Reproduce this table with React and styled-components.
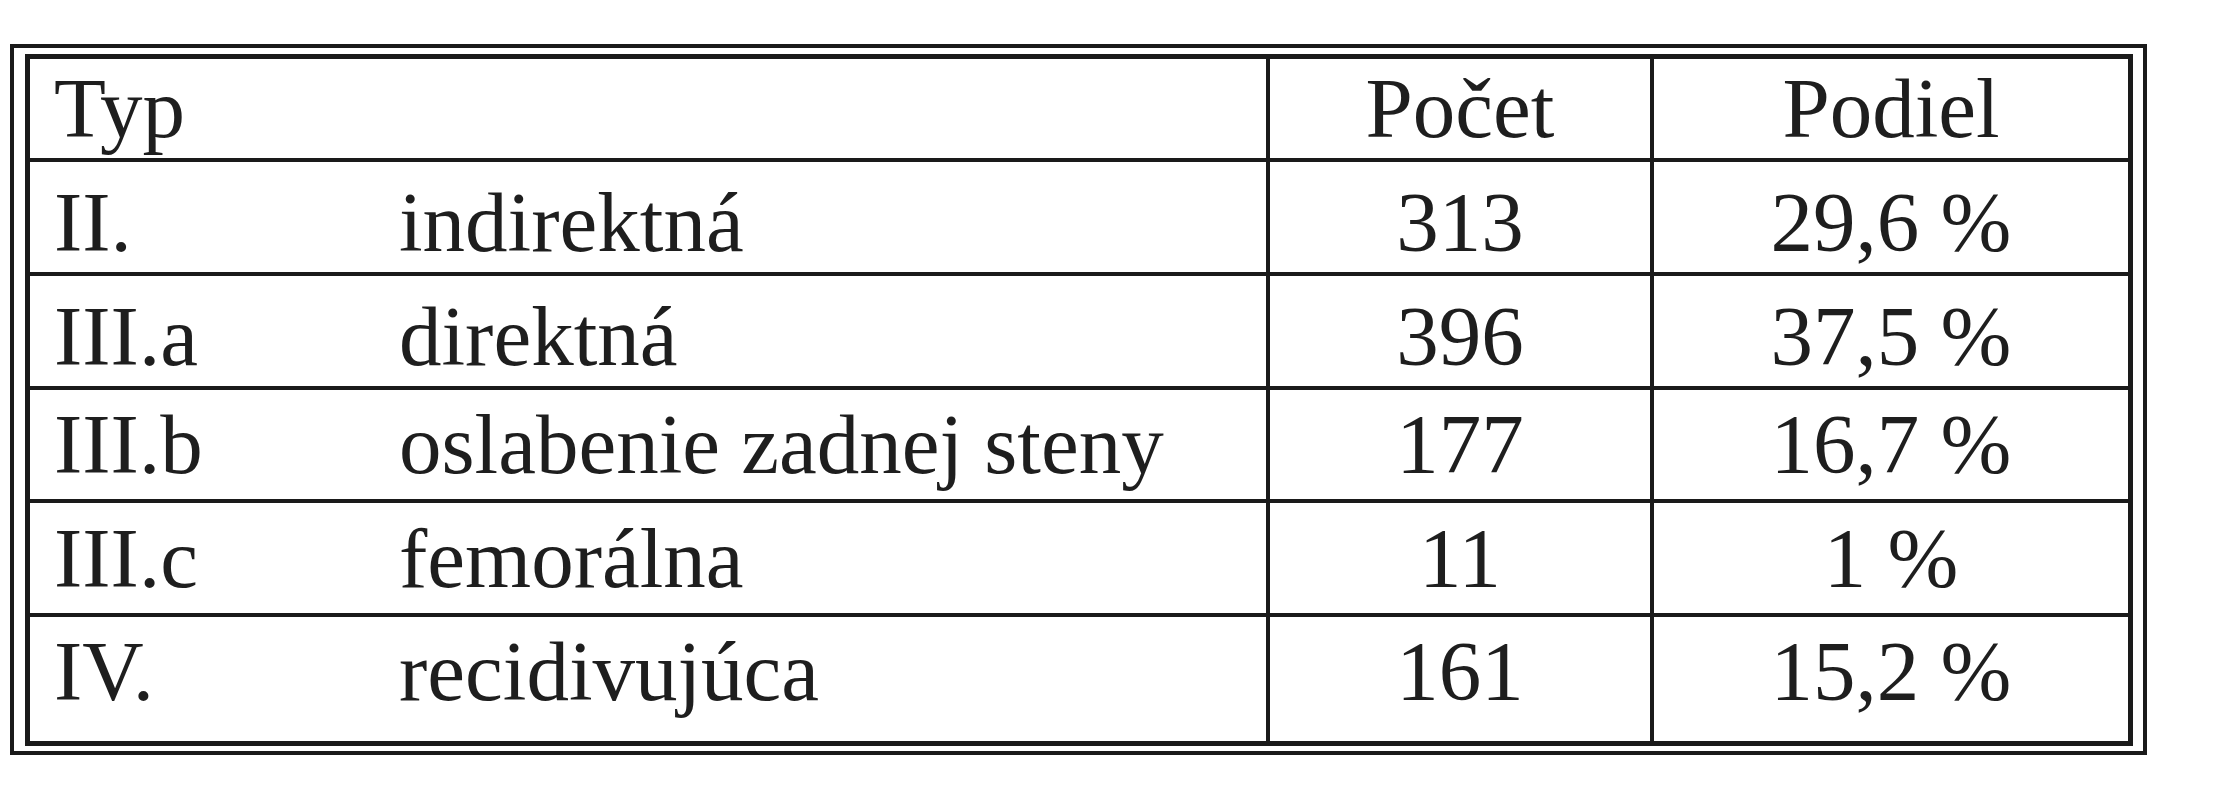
import React from 'react'
import styled, { createGlobalStyle } from 'styled-components'

const rows = [
    { code: 'II.', name: 'indirektná', count: '313', share: '29,6 %', h: 110, pt: 18 },
    { code: 'III.a', name: 'direktná', count: '396', share: '37,5 %', h: 110, pt: 18 },
    { code: 'III.b', name: 'oslabenie zadnej steny', count: '177', share: '16,7 %', h: 109, pt: 12 },
    { code: 'III.c', name: 'femorálna', count: '11', share: '1 %', h: 110, pt: 13 },
    { code: 'IV.', name: 'recidivujúca', count: '161', share: '15,2 %', h: 124, pt: 12 },
]

const App = () => {
    return(
        <>
            <GlobalStyle/>
            <Page>
                <OuterFrame>
                    <InnerFrame>
                        <Row $h={99} $pt={7} $first>
                            <TypeCell>
                                <Code>Typ</Code>
                            </TypeCell>
                            <NumCell>Počet</NumCell>
                            <NumCell>Podiel</NumCell>
                        </Row>
                        {rows.map(row => {
                            return (
                                <Row key={row.code} $h={row.h} $pt={row.pt}>
                                    <TypeCell>
                                        <Code>{row.code}</Code>
                                        <Name>{row.name}</Name>
                                    </TypeCell>
                                    <NumCell>{row.count}</NumCell>
                                    <NumCell>{row.share}</NumCell>
                                </Row>
                            )
                        })}
                    </InnerFrame>
                </OuterFrame>
            </Page>
        </>
    )
}

const GlobalStyle = createGlobalStyle`
    html, body {
        margin: 0;
        padding: 0;
        background: #ffffff;
    }
    * {
        box-sizing: border-box;
    }
`

const Page = styled.div`
    width: 2217px;
    height: 800px;
    padding: 44px 0 0 10px;
    background: #ffffff;
    font-family: "Liberation Serif", "Times New Roman", serif;
    font-size: 85px;
    line-height: 85px;
    color: #1e1e1e;
`

const OuterFrame = styled.div`
    width: 2137px;
    border: 4px solid #1a1a1a;
    padding: 6px 10px 5px 11px;
`

const InnerFrame = styled.div`
    border: 5px solid #1a1a1a;
    display: flex;
    flex-direction: column;
`

const Row = styled.div`
    display: grid;
    grid-template-columns: 1236px 384px 478px;
    height: ${p => p.$h + (p.$first ? 0 : 4)}px;
    border-top: ${p => p.$first ? 'none' : '4px solid #1a1a1a'};

    & > * {
        padding-top: ${p => p.$pt}px;
    }
`

const TypeCell = styled.div`
    display: flex;
    white-space: nowrap;
`

const Code = styled.div`
    width: 369px;
    padding-left: 24px;
`

const Name = styled.div`
`

const NumCell = styled.div`
    border-left: 4px solid #1a1a1a;
    text-align: center;
    white-space: nowrap;
`

export default App
